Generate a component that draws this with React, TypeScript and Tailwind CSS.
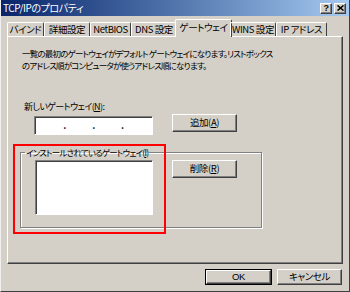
import type { ReactNode } from "react"

const font = "font-['Noto_Sans_CJK_JP','Liberation_Sans',sans-serif] [font-feature-settings:'palt']"

const raised =
  "bg-[#d4d0c8] border border-t-white border-l-white border-r-[#404040] border-b-[#404040] shadow-[inset_-1px_-1px_#808080]"
const sunken =
  "bg-white border border-t-[#808080] border-l-[#808080] border-r-white border-b-white shadow-[inset_1px_1px_#404040]"

function Button({ children, className = "" }: { children: ReactNode; className?: string }) {
  return <div className={`${raised} flex items-center justify-center whitespace-nowrap ${className}`}>{children}</div>
}

type Tab = { label: string; width: string; active?: boolean }

const tabs: Tab[] = [
  { label: "バインド", width: "w-[37px]" },
  { label: "詳細設定", width: "w-[46px]" },
  { label: "NetBIOS", width: "w-[41px]" },
  { label: "DNS 設定", width: "w-[46px]" },
  { label: "ゲートウェイ", width: "w-[57px]", active: true },
  { label: "WINS 設定", width: "w-[46px]" },
  { label: "IP アドレス", width: "w-[51px]" },
]

export default function App() {
  return (
    <div
      className={`${font} w-[350px] h-[292px] bg-[#d4d0c8] border-l border-l-[#f0f0f0] border-r border-b border-r-[#404040] border-b-[#404040] flex flex-col text-[9.5px] leading-none text-black tracking-[-0.4px]`}
    >
      {/* title bar */}
      <div className="h-[16px] shrink-0 flex items-center justify-between pl-[2px] pr-[3px] bg-linear-to-r from-[#0a246a] to-[#a6caf0] text-white text-[10px]">
        <span>TCP/IPのプロパティ</span>
        <div className="flex gap-[2px]">
          <div className={`${raised} w-[12px] h-[11px] flex items-center justify-center text-[9px] font-bold text-black font-['Liberation_Sans',sans-serif]`}>
            ?
          </div>
          <div className={`${raised} w-[12px] h-[11px] flex items-center justify-center`}>
            <svg width="7" height="6" viewBox="0 0 7 6">
              <path d="M0.5 0.5 L6.5 5.5 M6.5 0.5 L0.5 5.5" stroke="black" strokeWidth="1.6" />
            </svg>
          </div>
        </div>
      </div>

      {/* tabs */}
      <div className="mt-[3px] ml-[6px] h-[17px] flex items-end relative z-10">
        {tabs.map((t) =>
          t.active ? (
            <div
              key={t.label}
              className={`${t.width} shrink-0 whitespace-nowrap -mx-[2px] h-[18px] -mb-px bg-[#d4d0c8] border-t border-l border-t-white border-l-white border-r border-r-[#404040] rounded-t-[2px] flex items-start justify-center pt-[3px]`}
            >
              {t.label}
            </div>
          ) : (
            <div
              key={t.label}
              className={`${t.width} shrink-0 whitespace-nowrap h-[14px] border-t border-l border-t-white border-l-white border-r border-r-[#404040] rounded-t-[2px] flex items-start justify-center pt-[2px]`}
            >
              {t.label}
            </div>
          ),
        )}
      </div>

      {/* panel */}
      <div className="ml-[6px] w-[336px] h-[228px] border border-t-white border-l-white border-r-[#404040] border-b-[#404040] shadow-[inset_-1px_-1px_#808080] relative">
        <p className="mt-[10px] ml-[14px] text-[8.5px] leading-[12px] tracking-[-0.8px]">
          一覧の最初のゲートウェイがデフォルト ゲートウェイになります。リストボックス
          <br />
          のアドレス順がコンピュータが使うアドレス順になります。
        </p>

        <div className="mt-[31px] ml-[16px] text-[9px] tracking-[-0.6px]">
          新しいゲートウェイ(<span className="underline">N</span>):
        </div>

        <div className="mt-[5px] ml-[26px] flex items-start gap-[19px]">
          <div className={`${sunken} w-[119px] h-[19px] flex items-center px-[2px] font-bold`}>
            <span className="flex-1" />
            <span>.</span>
            <span className="flex-1" />
            <span>.</span>
            <span className="flex-1" />
            <span>.</span>
            <span className="flex-1" />
          </div>
          <Button className="w-[65px] h-[18px] -mt-[2px]">
            追加(<span className="underline">A</span>)
          </Button>
        </div>

        <fieldset className="mt-[13px] ml-[12px] w-[242px] h-[80px] border border-[#808080] shadow-[1px_1px_white,inset_1px_1px_white]">
          <legend className="ml-[4px] px-[1px] text-[8.5px] tracking-[-0.8px]">
            インストールされているゲートウェイ(<span className="underline">I</span>)
          </legend>
          <div className="pl-[14px] pt-[3px] flex items-start gap-[19px]">
            <div className={`${sunken} w-[118px] h-[55px]`} />
            <Button className="w-[65px] h-[18px]">
              削除(<span className="underline">R</span>)
            </Button>
          </div>
        </fieldset>

        {/* annotation box */}
        <div className="absolute left-[5px] top-[107px] w-[153px] h-[90px] border-2 border-[#ff0000]" />
      </div>

      {/* bottom buttons */}
      <div className="mt-[5px] mr-[7px] flex justify-end gap-[5px]">
        <div className="border border-black">
          <Button className="w-[65px] h-[14px] font-['Liberation_Sans',sans-serif]">OK</Button>
        </div>
        <Button className="w-[65px] h-[16px]">キャンセル</Button>
      </div>
    </div>
  )
}
